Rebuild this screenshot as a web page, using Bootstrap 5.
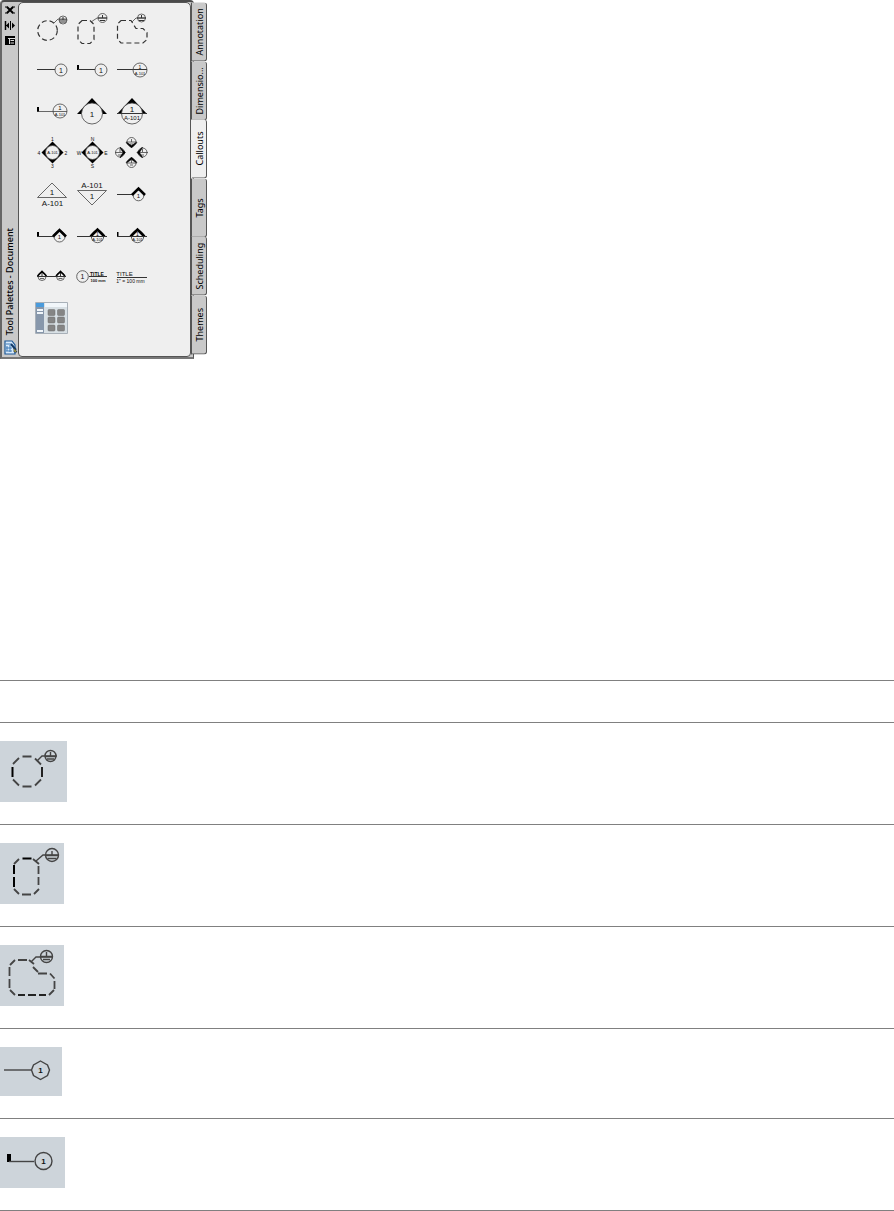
<!DOCTYPE html>
<html lang="en">
<head>
<meta charset="utf-8">
<meta name="viewport" content="width=device-width, initial-scale=1">
<title>Tool Palettes - Document</title>
<link href="https://cdn.jsdelivr.net/npm/bootstrap@5.3.0/dist/css/bootstrap.min.css" rel="stylesheet">
<style>
body{font-family:"Noto Sans",sans-serif;background:#fff;color:#000}
button{color:#000}
svg{display:block}
.palette{height:359px;margin-bottom:321px}
.palette-frame{width:194px;background:#c9c9c9;border:1px solid #555;border-top:2px solid #4a4a4a;border-left:2px solid #666;border-bottom:2px solid #777;border-radius:4px 4px 0 0}
.side-bar{width:16px;padding:3px 0 0 2px}
.side-title{writing-mode:vertical-rl;transform:rotate(180deg);font-size:9px;line-height:12px;font-weight:500;white-space:nowrap}
.tool-pane{background:#efefef;border:1px solid #555;border-radius:5px 5px 4px 4px;margin:0 2px 0 0;padding:7px 0 0 13px}
.tool-grid{display:grid;grid-template-columns:repeat(3,40px);grid-auto-rows:41px}
.palette-tabs{width:16px;margin:3px 0 5px -3px;position:relative}
.tab-btn{writing-mode:vertical-rl;transform:rotate(180deg);flex:1 1 0;min-height:0;font-size:9px;line-height:13px;background:#c9c9c9;border:1px solid #555;border-radius:3px 0 0 3px;white-space:nowrap;border-bottom-width:0}
.tab-btn.active{background:#efefef;border-right-color:#efefef}
.ln{fill:none;stroke:#333;stroke-width:1}
.thin{fill:none;stroke:#444;stroke-width:.8}
.face{fill:#efefef;stroke:#444;stroke-width:.8}
.roof{fill:none;stroke:#000;stroke-width:2.6}
.dash{fill:none;stroke:#333;stroke-width:1.2;stroke-dasharray:5 3}
svg text{font-family:"Liberation Sans",sans-serif;text-anchor:middle;fill:#111}
.tool-table{border-collapse:collapse}
.tool-table tr{border-top:1px solid #808080;border-bottom:1px solid #808080}
.tool-table th{height:42px;padding:0}
.tool-table td{padding:18px 0 22px}
.shot{background:#cdd4da}
.shot .ln{stroke-width:1.4;stroke:#444}
.shot .seg{stroke-width:1.8;fill:none;stroke:#444}
</style>
</head>
<body>
<main>
<section class="palette d-flex" aria-label="Tool Palettes - Document">
<div class="palette-frame d-flex">
<div class="side-bar d-flex flex-column align-items-start flex-shrink-0">
<button class="btn p-0 border-0" aria-label="Close"><svg width="13" height="14" viewBox="0 0 13 14"><path d="M3 2 9 8M9 2 3 8" stroke="#000" stroke-width="2"/><path d="M1 2h3M8 2h3M1 8h3M8 8h3" stroke="#000"/></svg></button>
<button class="btn p-0 border-0" aria-label="Auto-hide"><svg width="13" height="16" viewBox="0 0 13 16"><path d="M1.500 2v9" stroke="#000" stroke-width="1.500"/><path d="M6.500 2v9M2 6.500h2" stroke="#000"/><path d="m2 6.500 3-3v6zM11 6.500l-3-3v6z"/></svg></button>
<button class="btn p-0 border-0" aria-label="Properties"><svg width="13" height="14" viewBox="0 0 13 14"><path d="M1 1h10v9H1z"/><path d="M4 3.500h7M6.500 5.500H10M6.500 8H10M5.500 4v5" stroke="#ddd"/></svg></button>
<span class="side-title mt-auto">Tool Palettes - Document</span>
<svg class="mt-1" width="14" height="18" viewBox="1 0 14 18"><path d="M2 2h7l3 4v9H2z" fill="#d8eafc" stroke="#1c5998" stroke-width="1.200"/><path d="M3 5h5M4 7v5M7 6v7M3 9h6M3 12h6" stroke="#3a78b5" fill="none"/><path d="m8 5 5 6" stroke="#123a68" stroke-width="2"/><path d="m11 9 3 4h-3z" fill="#f0d23a" stroke="#234" stroke-width=".8"/></svg>
</div>
<div class="tool-pane flex-grow-1">
<div class="tool-grid">
<button class="btn p-0 border-0" aria-label="Detail boundary, circle"><svg width="40" height="41" viewBox="32 10 40 41"><circle class="dash" cx="47.500" cy="30.500" r="9.800"/><path class="thin" d="m54 23 4-4h9"/><circle class="thin" cx="63" cy="20" r="4"/><path class="ln" d="M59 20h8M63 17v3M60 22h6"/></svg></button>
<button class="btn p-0 border-0" aria-label="Detail boundary, rectangle"><svg width="40" height="41" viewBox="72 10 40 41"><path class="dash" d="M82 20.500h8l4 4v15l-4 4h-8l-4-4v-15z"/><path class="thin" d="m91 22 6-4h10"/><circle class="thin" cx="102.500" cy="18" r="4.500"/><path class="ln" d="M98 18h9M102.500 15v3M100 20.500h5"/></svg></button>
<button class="btn p-0 border-0" aria-label="Detail boundary, freeform"><svg width="40" height="41" viewBox="112 10 40 41"><path class="dash" d="M121 20.500h10l5 8h7l4 4v7l-4 3.500h-22l-3.500-4V24z"/><path class="thin" d="m132 22 4-4h10"/><circle class="thin" cx="141.500" cy="18" r="4"/><path class="ln" d="M137 18h9M141.500 15v3M139 20.500h5"/></svg></button>

<button class="btn p-0 border-0" aria-label="Callout 1"><svg width="40" height="41" viewBox="32 51 40 41"><path class="ln" d="M37 69.500h18"/><circle class="thin" cx="61" cy="70" r="6"/><text x="61" y="72.500" font-size="7">1</text></svg></button>
<button class="btn p-0 border-0" aria-label="Callout 1 with tail"><svg width="40" height="41" viewBox="72 51 40 41"><path d="M77 65h2v5h-2z"/><path class="ln" d="M78 69.500h17"/><circle class="thin" cx="101" cy="70" r="6"/><text x="101" y="72.500" font-size="7">1</text></svg></button>
<button class="btn p-0 border-0" aria-label="Callout with sheet"><svg width="40" height="41" viewBox="112 51 40 41"><path class="ln" d="M117 69.500h30"/><circle class="thin" cx="140" cy="70" r="7"/><text x="140" y="69" font-size="5">1</text><text x="140" y="74.500" font-size="4">A-101</text></svg></button>

<button class="btn p-0 border-0" aria-label="Callout with sheet and tail"><svg width="40" height="41" viewBox="32 92 40 41"><path d="M37 107h2v5h-2z"/><path class="thin" d="M37 111.500h30"/><circle class="thin" cx="60" cy="111" r="7"/><text x="60" y="110" font-size="6">1</text><text x="60" y="116" font-size="4">A-101</text></svg></button>
<button class="btn p-0 border-0" aria-label="Elevation mark"><svg width="40" height="41" viewBox="72 92 40 41"><path d="m92 98 15 16H77z"/><circle class="face" cx="92" cy="113.500" r="10.500"/><text x="92" y="116.500" font-size="8">1</text></svg></button>
<button class="btn p-0 border-0" aria-label="Elevation mark with sheet"><svg width="40" height="41" viewBox="112 92 40 41"><path d="m132 98 15 16h-30z"/><circle class="face" cx="132" cy="113.500" r="10.500"/><path class="ln" d="M117 113.500h30"/><text x="132" y="112" font-size="8">1</text><text x="132" y="120" font-size="6">A-101</text></svg></button>

<button class="btn p-0 border-0" aria-label="Interior elevation 1-4"><svg width="40" height="41" viewBox="32 133 40 41"><path d="m52.500 141.500 11 11-11 11-11-11z"/><circle class="face" cx="52.500" cy="152.500" r="7"/><g font-size="5"><text x="52.500" y="154" font-size="4">A-101</text><text x="52.500" y="141">1</text><text x="66" y="154.500">2</text><text x="52.500" y="168">3</text><text x="39" y="154.500">4</text></g></svg></button>
<button class="btn p-0 border-0" aria-label="Interior elevation N-S"><svg width="40" height="41" viewBox="72 133 40 41"><path d="m92.500 141.500 11 11-11 11-11-11z"/><circle class="face" cx="92.500" cy="152.500" r="7"/><g font-size="5"><text x="92.500" y="154" font-size="4">A-101</text><text x="92.500" y="141">N</text><text x="106" y="154.500">E</text><text x="92.500" y="168">S</text><text x="79" y="154.500">W</text></g></svg></button>
<button class="btn p-0 border-0" aria-label="Four elevations"><svg width="40" height="41" viewBox="112 133 40 41"><circle class="face" cx="131.500" cy="142" r="4.500"/><circle class="face" cx="120" cy="152.500" r="4.500"/><circle class="face" cx="142.500" cy="152.500" r="4.500"/><circle class="face" cx="131.500" cy="163" r="4.500"/><path class="thin" d="M126 142h11M131.500 139v3M130 144h3M115 152.500h10M120 149v3M118 155h4M138 152.500h10M142.500 149v3M141 155h3M126 163h11M131.500 160v3M130 165h3"/><path d="m126 142.500 5.500 5.500 5.500-5.500-2 .5-3.500 2.500-3.500-2.500zM120 147l5.500 5.500-5.500 5.500.5-1.500 2.500-4-2.500-4zM142.500 147l-5.500 5.500 5.500 5.500-.5-1.500-2.500-4 2.500-4zM126 162.500l5.500-5.500 5.500 5.500-2-.5-3.500-2.500-3.500 2.500z" stroke="#000" stroke-width=".5"/></svg></button>

<button class="btn p-0 border-0" aria-label="Section mark up"><svg width="40" height="41" viewBox="32 174 40 41"><path class="thin" d="m52 183 14.500 14.500h-29z"/><text x="52" y="195" font-size="8">1</text><text x="52.500" y="206" font-size="8">A-101</text></svg></button>
<button class="btn p-0 border-0" aria-label="Section mark down"><svg width="40" height="41" viewBox="72 174 40 41"><path class="thin" d="M77.500 190.500h29L92 205z"/><text x="92" y="188" font-size="8">A-101</text><text x="92" y="199" font-size="8">1</text></svg></button>
<button class="btn p-0 border-0" aria-label="Section mark"><svg width="40" height="41" viewBox="112 174 40 41"><path class="ln" d="M117 194.500h15"/><circle class="face" cx="138.500" cy="195.500" r="5.300"/><path class="roof" d="m132 195 6.500-6.500 6.500 6.500"/><text x="138.500" y="198" font-size="6">1</text></svg></button>

<button class="btn p-0 border-0" aria-label="Section mark with tail"><svg width="40" height="41" viewBox="32 215 40 41"><path d="M37 232h2v5h-2z"/><path class="ln" d="M37 236.500h16"/><circle class="face" cx="59.500" cy="236.500" r="5.500"/><path class="roof" d="m53 236.500 6.500-6.500 6.500 6.500"/><text x="59.500" y="239" font-size="6">1</text></svg></button>
<button class="btn p-0 border-0" aria-label="Section mark with sheet"><svg width="40" height="41" viewBox="72 215 40 41"><circle class="face" cx="97.500" cy="236.500" r="6.200"/><path class="roof" d="m90.500 236.500 7-7 7 7"/><path class="ln" d="M77 236.500h30"/><text x="97.500" y="236" font-size="5">1</text><text x="97.500" y="241" font-size="4">A-101</text></svg></button>
<button class="btn p-0 border-0" aria-label="Section mark with sheet and tail"><svg width="40" height="41" viewBox="112 215 40 41"><path d="M117 232h1.500v5H117z"/><circle class="face" cx="137.500" cy="236.500" r="6.200"/><path class="roof" d="m130.500 236.500 7-7 7 7"/><path class="ln" d="M117 236.500h30"/><text x="137.500" y="236" font-size="5">1</text><text x="137.500" y="241" font-size="4">A-101</text></svg></button>

<button class="btn p-0 border-0" aria-label="Section line"><svg width="40" height="41" viewBox="32 256 40 41"><circle class="face" cx="42" cy="276.500" r="4"/><circle class="face" cx="60.500" cy="276.500" r="4"/><path d="m37.500 276 4.500-4.500 4.500 4.500M56 276l4.500-4.500L65 276" fill="none" stroke="#000" stroke-width="1.600"/><path class="ln" d="M37 276.500h29M42 273v3M60.500 273v3"/><path class="thin" d="M40 278.500h4M58.500 278.500h4"/></svg></button>
<button class="btn p-0 border-0" aria-label="Title mark with number"><svg width="40" height="41" viewBox="72 256 40 41"><circle class="thin" cx="82.500" cy="276.500" r="5.800"/><text x="82.500" y="279" font-size="7">1</text><path class="ln" d="M89 276.500h18"/><g font-weight="bold"><text x="97" y="275.500" font-size="5">TITLE</text><text x="98" y="281.500" font-size="4">100 mm</text></g></svg></button>
<button class="btn p-0 border-0" aria-label="Title mark"><svg width="40" height="41" viewBox="112 256 40 41"><text x="124.500" y="276" font-size="6">TITLE</text><path class="ln" d="M117 277.500h30"/><text x="130.500" y="282.500" font-size="5">1" = 100 mm</text></svg></button>

<button class="btn p-0 border-0" aria-label="Content Browser"><svg width="40" height="41" viewBox="32 297 40 41"><path fill="#d8e0e5" stroke="#a8b0b8" d="M35.500 302.500h32v31h-32z"/><path fill="#8797ab" d="M36 303h8v30h-8z"/><path fill="#4a9bdc" d="M36 303h8v4h-8z"/><path fill="#f1f6fa" d="M37 309h6v2h-6zM37 312h6v2h-6zM37 330h6v2h-6zM45 303h22v4H45z"/><g fill="#858585" stroke="#6b6b6b" stroke-width=".5"><rect x="48" y="309.500" width="7" height="6" rx="1"/><rect x="57.500" y="309.500" width="7" height="6" rx="1"/><rect x="48" y="317" width="7" height="6" rx="1"/><rect x="57.500" y="317" width="7" height="6" rx="1"/><rect x="48" y="325" width="7" height="6" rx="1"/><rect x="57.500" y="325" width="7" height="6" rx="1"/></g></svg></button>
</div>
</div>
</div>
<nav class="palette-tabs d-flex flex-column" aria-label="Palettes">
<button class="tab-btn p-0">Annotation</button>
<button class="tab-btn p-0">Dimensio...</button>
<button class="tab-btn p-0 active">Callouts</button>
<button class="tab-btn p-0">Tags</button>
<button class="tab-btn p-0">Scheduling</button>
<button class="tab-btn p-0">Themes</button>
</nav>
</section>

<table class="tool-table w-100">
<thead><tr><th></th></tr></thead>
<tbody>
<tr><td><svg class="shot" width="67" height="61" viewBox="0 741 67 61"><path class="seg" d="M22.500 756.500h9M22.500 786.500h9M13 764l6-6M35 758.500l6 6M13 779.500l6 6M35 785.500l6-6"/><path d="M12.500 767v10" stroke="#000" stroke-width="2"/><path d="M42 767v10" stroke="#222" stroke-width="2"/><path class="ln" d="m37 761 5-5h15"/><circle class="ln" cx="50.500" cy="756" r="5.500"/><path class="ln" d="M45 756.500h11M50.500 752v4M47 759h7"/></svg></td></tr>
<tr><td><svg class="shot" width="64" height="61" viewBox="0 843 64 61"><path class="seg" d="m14 864 5-5M33 859l6 5M14 889l5 5M22 894.500h9M34 894l5-5M38.500 866v8M38.500 877v8"/><path d="M14 865v9M14 877v10M22.500 858.500h9" stroke="#000" stroke-width="2"/><path class="ln" d="m36 861 7-6h16"/><circle class="ln" cx="52" cy="855" r="6.500"/><path class="ln" d="M45.500 855.500h13M52 851v4M47.500 858.500h9"/></svg></td></tr>
<tr><td><svg class="shot" width="64" height="61" viewBox="0 945 64 61"><path class="seg" d="m10 965 5-5M18 960h9M29 960l5 4M33 967l5 5M38 973.500h9M50 973.500l4.500 5M54.500 981v8M54 990l-5 5M10 990l5 5M9.500 967v9M9.500 979v9"/><path d="M18 995h7M28 995h8M39 995h7" stroke="#222" stroke-width="2"/><path class="ln" d="m31 962 5-5h16"/><circle class="ln" cx="46.500" cy="956.500" r="6"/><path class="ln" d="M40.500 956.500h12M46.500 952v4M43 959.500h7"/></svg></td></tr>
<tr><td><svg class="shot" width="62" height="49" viewBox="0 1047 62 49"><path class="ln" d="M4 1070h27"/><path class="ln" d="m40.500 1061 7 4 2 5-2 5.500-7 4-7-4-2-5.500 2-5z"/><text x="40.500" y="1073" font-size="8" font-weight="bold">1</text></svg></td></tr>
<tr><td><svg class="shot" width="65" height="51" viewBox="0 1137 65 51"><path d="M7 1154h4v8H7z"/><path class="ln" d="M9 1161.500h25"/><circle class="ln" cx="43.500" cy="1161" r="8.500"/><text x="43.500" y="1164" font-size="8" font-weight="bold">1</text></svg></td></tr>
</tbody>
</table>
</main>
<script src="https://cdn.jsdelivr.net/npm/bootstrap@5.3.0/dist/js/bootstrap.bundle.min.js"></script>
</body>
</html>
